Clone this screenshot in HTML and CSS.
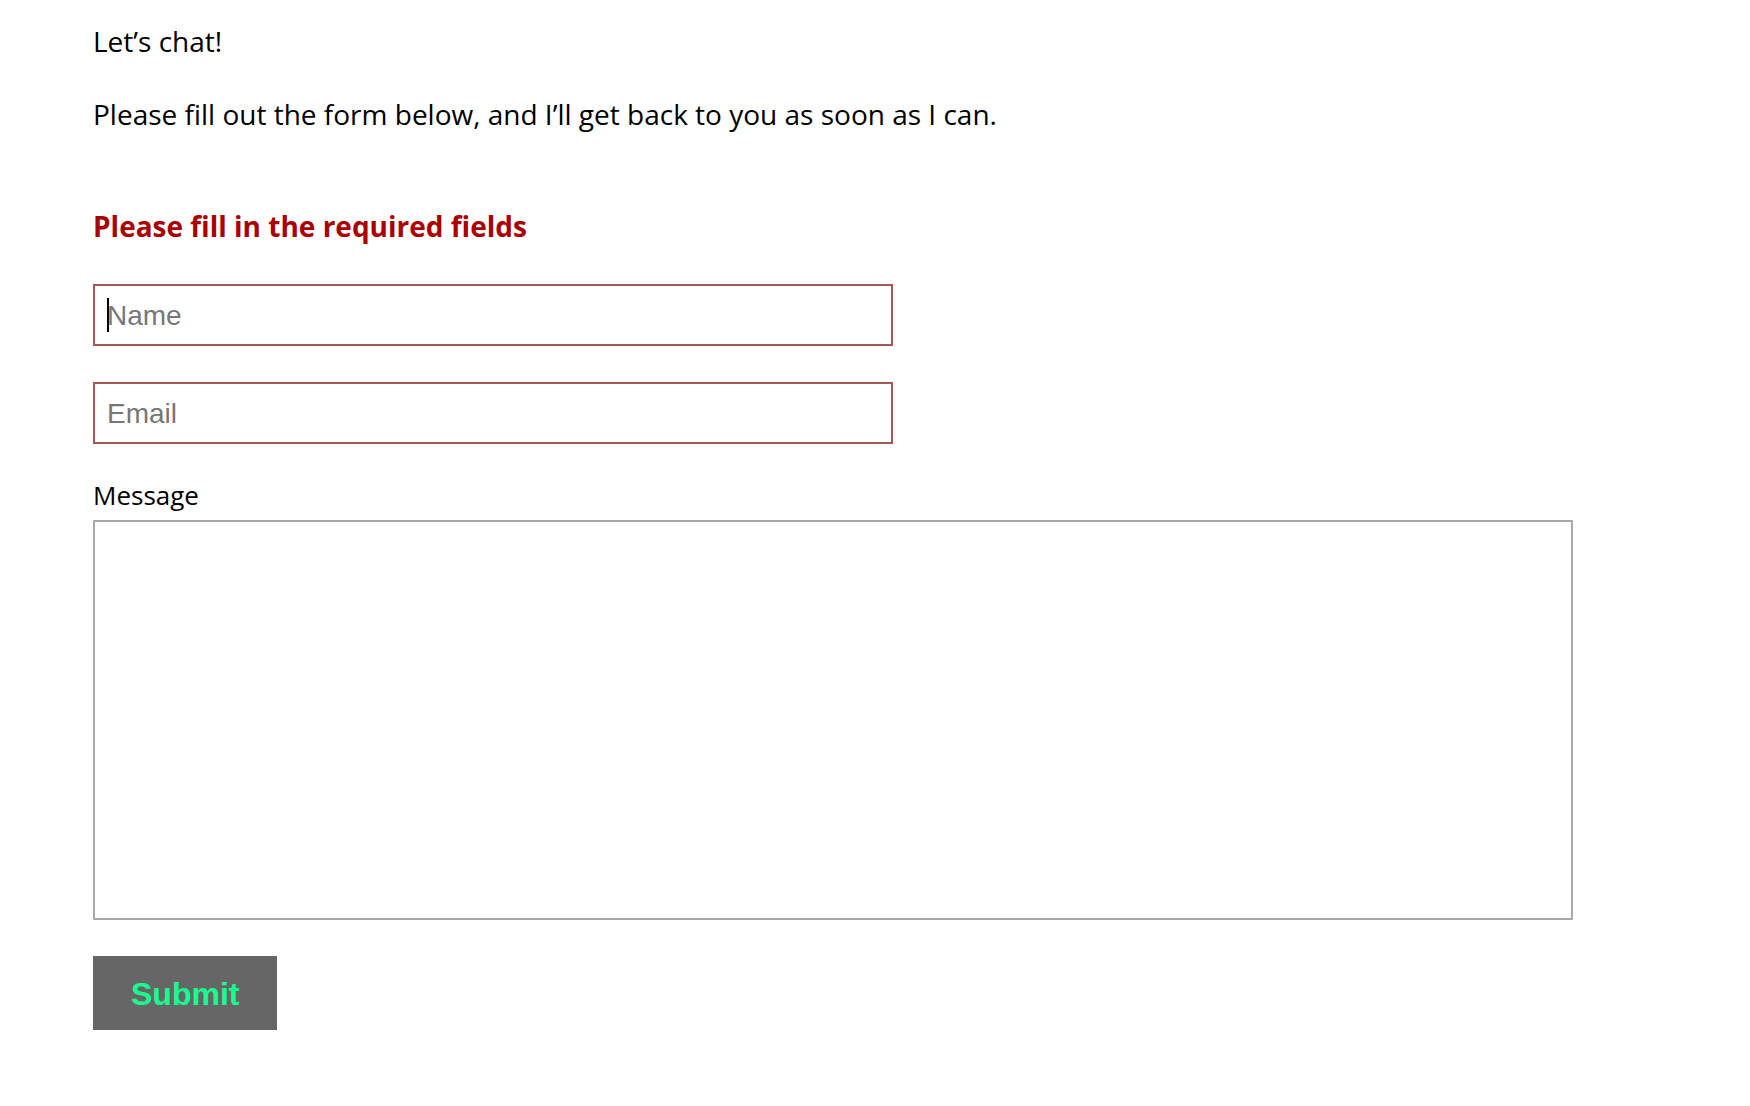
FILE: index.html
```html
<!DOCTYPE html>
<html lang="en">
<head>
<meta charset="utf-8">
<meta name="viewport" content="width=device-width, initial-scale=1">
<title>Contact</title>
<link rel="stylesheet" href="styles.css">
</head>
<body>
<main class="contact">
  <p class="intro">Let’s chat!</p>
  <p class="intro">Please fill out the form below, and I’ll get back to you as soon as I can.</p>
  <form class="form" novalidate>
    <p class="error" role="alert">Please fill in the required fields</p>
    <div class="field">
      <input class="input" type="text" name="name" placeholder="Name" aria-label="Name" required>
      <span class="caret" aria-hidden="true"></span>
    </div>
    <div class="field">
      <input class="input" type="email" name="email" placeholder="Email" aria-label="Email" required>
    </div>
    <label class="label" for="message">Message</label>
    <textarea class="message" id="message" name="message"></textarea>
    <button class="submit" type="submit">Submit</button>
  </form>
</main>
</body>
</html>
```
FILE: styles.css
```css
* {
  box-sizing: border-box;
}

body {
  margin: 0;
  background: #fff;
  color: #000;
  font: 28px/44px "Open Sans", sans-serif;
  font-kerning: none;
}

.contact {
  padding: 19px 177px 76px 93px;
}

.intro {
  margin: 0 0 29px;
}

.form {
  display: flex;
  flex-direction: column;
  align-items: flex-start;
  padding-top: 39px;
}

.error {
  margin: 0 0 36px;
  color: #a00;
  font-weight: 700;
}

.field {
  position: relative;
  width: 100%;
  max-width: 800px;
  margin-bottom: 36px;
}

.input {
  display: block;
  width: 100%;
  padding: 13px 12px 11px;
  border: 2px solid #a85555;
  border-radius: 0;
  background: #fff;
  color: #000;
  font: 28px/34px "Liberation Sans", Arial, sans-serif;
  outline: 0;
}

.input::placeholder {
  color: #777;
  opacity: 1;
}

/* Text cursor drawn in the first field */
.caret {
  position: absolute;
  top: 14px;
  left: 14px;
  width: 2px;
  height: 34px;
  background: #000;
}

.label {
  margin-bottom: 10px;
  font-size: 26px;
  line-height: 30px;
}

.message {
  display: block;
  width: 100%;
  height: 400px;
  margin-bottom: 36px;
  padding: 12px;
  border: 2px solid #a9a9a9;
  border-radius: 0;
  font: 28px/34px "Liberation Sans", Arial, sans-serif;
  resize: none;
}

.submit {
  padding: 19px 38px 17px;
  border: 0;
  background: #666;
  color: #17ff8f;
  font: 700 32px/38px "Liberation Sans", Arial, sans-serif;
}
```
